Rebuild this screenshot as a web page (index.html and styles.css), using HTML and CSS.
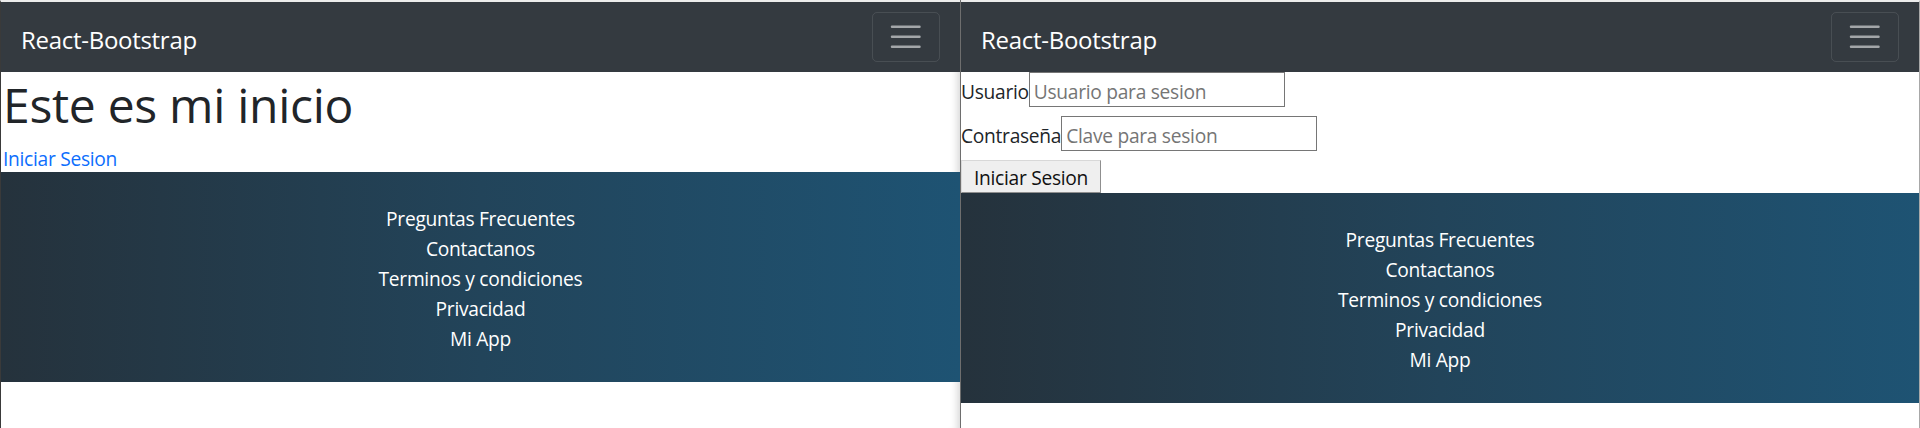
FILE: index.html
```html
<!DOCTYPE html>
<html lang="es">
<head>
<meta charset="utf-8">
<title>React-Bootstrap</title>
<link rel="stylesheet" href="styles.css">
</head>
<body>
<div class="screen">
  <section class="window window-left">
    <nav class="navbar">
      <a class="brand" href="#">React-Bootstrap</a>
      <button class="toggler" type="button" aria-label="Toggle navigation">
        <svg class="toggler-icon" viewBox="0 0 30 30" width="37.5" height="37.5"><path d="M4 7h22M4 15h22M4 23h22" stroke="rgba(255,255,255,0.55)" stroke-width="2" stroke-linecap="round" fill="none"/></svg>
      </button>
    </nav>
    <main class="content">
      <h1 class="title">Este es mi inicio</h1>
      <a class="link" href="#">Iniciar Sesion</a>
    </main>
    <footer class="footer">
      <a href="#">Preguntas Frecuentes</a>
      <a href="#">Contactanos</a>
      <a href="#">Terminos y condiciones</a>
      <a href="#">Privacidad</a>
      <a href="#">Mi App</a>
    </footer>
  </section>
  <div class="divider"></div>
  <section class="window window-right">
    <nav class="navbar">
      <a class="brand" href="#">React-Bootstrap</a>
      <button class="toggler" type="button" aria-label="Toggle navigation">
        <svg class="toggler-icon" viewBox="0 0 30 30" width="37.5" height="37.5"><path d="M4 7h22M4 15h22M4 23h22" stroke="rgba(255,255,255,0.55)" stroke-width="2" stroke-linecap="round" fill="none"/></svg>
      </button>
    </nav>
    <form class="login">
      <div class="row"><label for="u">Usuario</label><input id="u" class="field" type="text" placeholder="Usuario para sesion"></div>
      <div class="row"><label for="p">Contraseña</label><input id="p" class="field" type="password" placeholder="Clave para sesion"></div>
      <div class="row"><button class="submit" type="button">Iniciar Sesion</button></div>
    </form>
    <footer class="footer">
      <a href="#">Preguntas Frecuentes</a>
      <a href="#">Contactanos</a>
      <a href="#">Terminos y condiciones</a>
      <a href="#">Privacidad</a>
      <a href="#">Mi App</a>
    </footer>
  </section>
</div>
</body>
</html>
```
FILE: styles.css
```css
* { box-sizing: border-box; }
html, body { margin: 0; padding: 0; background: #fff; }
body {
  font-family: "Open Sans", "Noto Sans", "Liberation Sans", sans-serif;
  font-size: 19.2px;
  letter-spacing: -0.015em;
  line-height: 1.5;
  color: #212529;
}
.screen {
  display: flex;
  width: 1920px;
  height: 428px;
  overflow: hidden;
}
.window {
  display: flex;
  flex-direction: column;
  border-top: 2px solid #ececec;
  background: #fff;
}
.window-left {
  width: 960px;
  border-left: 1px solid #3a3a3a;
  box-shadow: inset -10px 0 8px -8px rgba(0,0,0,0.18);
}
.divider {
  width: 1px;
  background: #6e6e6e;
}
.window-right {
  width: 959px;
  border-right: 1px solid #a8a8a8;
}
.navbar {
  height: 70px;
  flex: none;
  background: #343a40;
  display: flex;
  align-items: center;
  justify-content: space-between;
  padding: 0 20px;
}
.brand {
  color: #fff;
  text-decoration: none;
  font-size: 24px;
  line-height: 36px;
  padding-top: 5px;
}
.toggler {
  width: 68px;
  height: 50px;
  padding: 0;
  background: transparent;
  border: 1px solid rgba(255,255,255,0.1);
  border-radius: 5px;
  display: flex;
  align-items: center;
  justify-content: center;
}
.toggler-icon { display: block; }
.content {
  height: 100px;
  flex: none;
  padding: 0 2px;
}
.title {
  margin: 3px 0 9px;
  font-size: 48px;
  font-weight: 400;
  line-height: 60px;
}
.link {
  display: block;
  color: #0d6efd;
  text-decoration: none;
  padding-top: 2px;
  line-height: 26px;
}
.footer {
  flex: none;
  height: 210px;
  padding: 32px 0 28px;
  display: flex;
  flex-direction: column;
  align-items: center;
  background: linear-gradient(90deg, #25323c 0%, #22445a 50%, #1e5373 100%);
}
.footer a {
  color: #fff;
  text-decoration: none;
  line-height: 30px;
}
.login {
  display: flex;
  flex-direction: column;
  gap: 9px;
  margin: 0;
}
.row {
  display: flex;
  align-items: center;
}
.row label {
  line-height: 30px;
  padding-top: 4px;
}
.field {
  width: 256px;
  height: 35px;
  border: 1px solid #767676;
  padding: 3px 4px 0;
  font: inherit;
  letter-spacing: inherit;
  color: #212529;
  background: #fff;
}
.field::placeholder { color: #757575; }
.submit {
  width: 140px;
  height: 33px;
  padding: 2px 0 0;
  font: inherit;
  letter-spacing: inherit;
  white-space: nowrap;
  line-height: 1;
  text-align: center;
  color: #111;
  background: #efefef;
  border: 1px solid;
  border-color: #d8d8d8 #8f8f8f #8f8f8f #d8d8d8;
}
```
